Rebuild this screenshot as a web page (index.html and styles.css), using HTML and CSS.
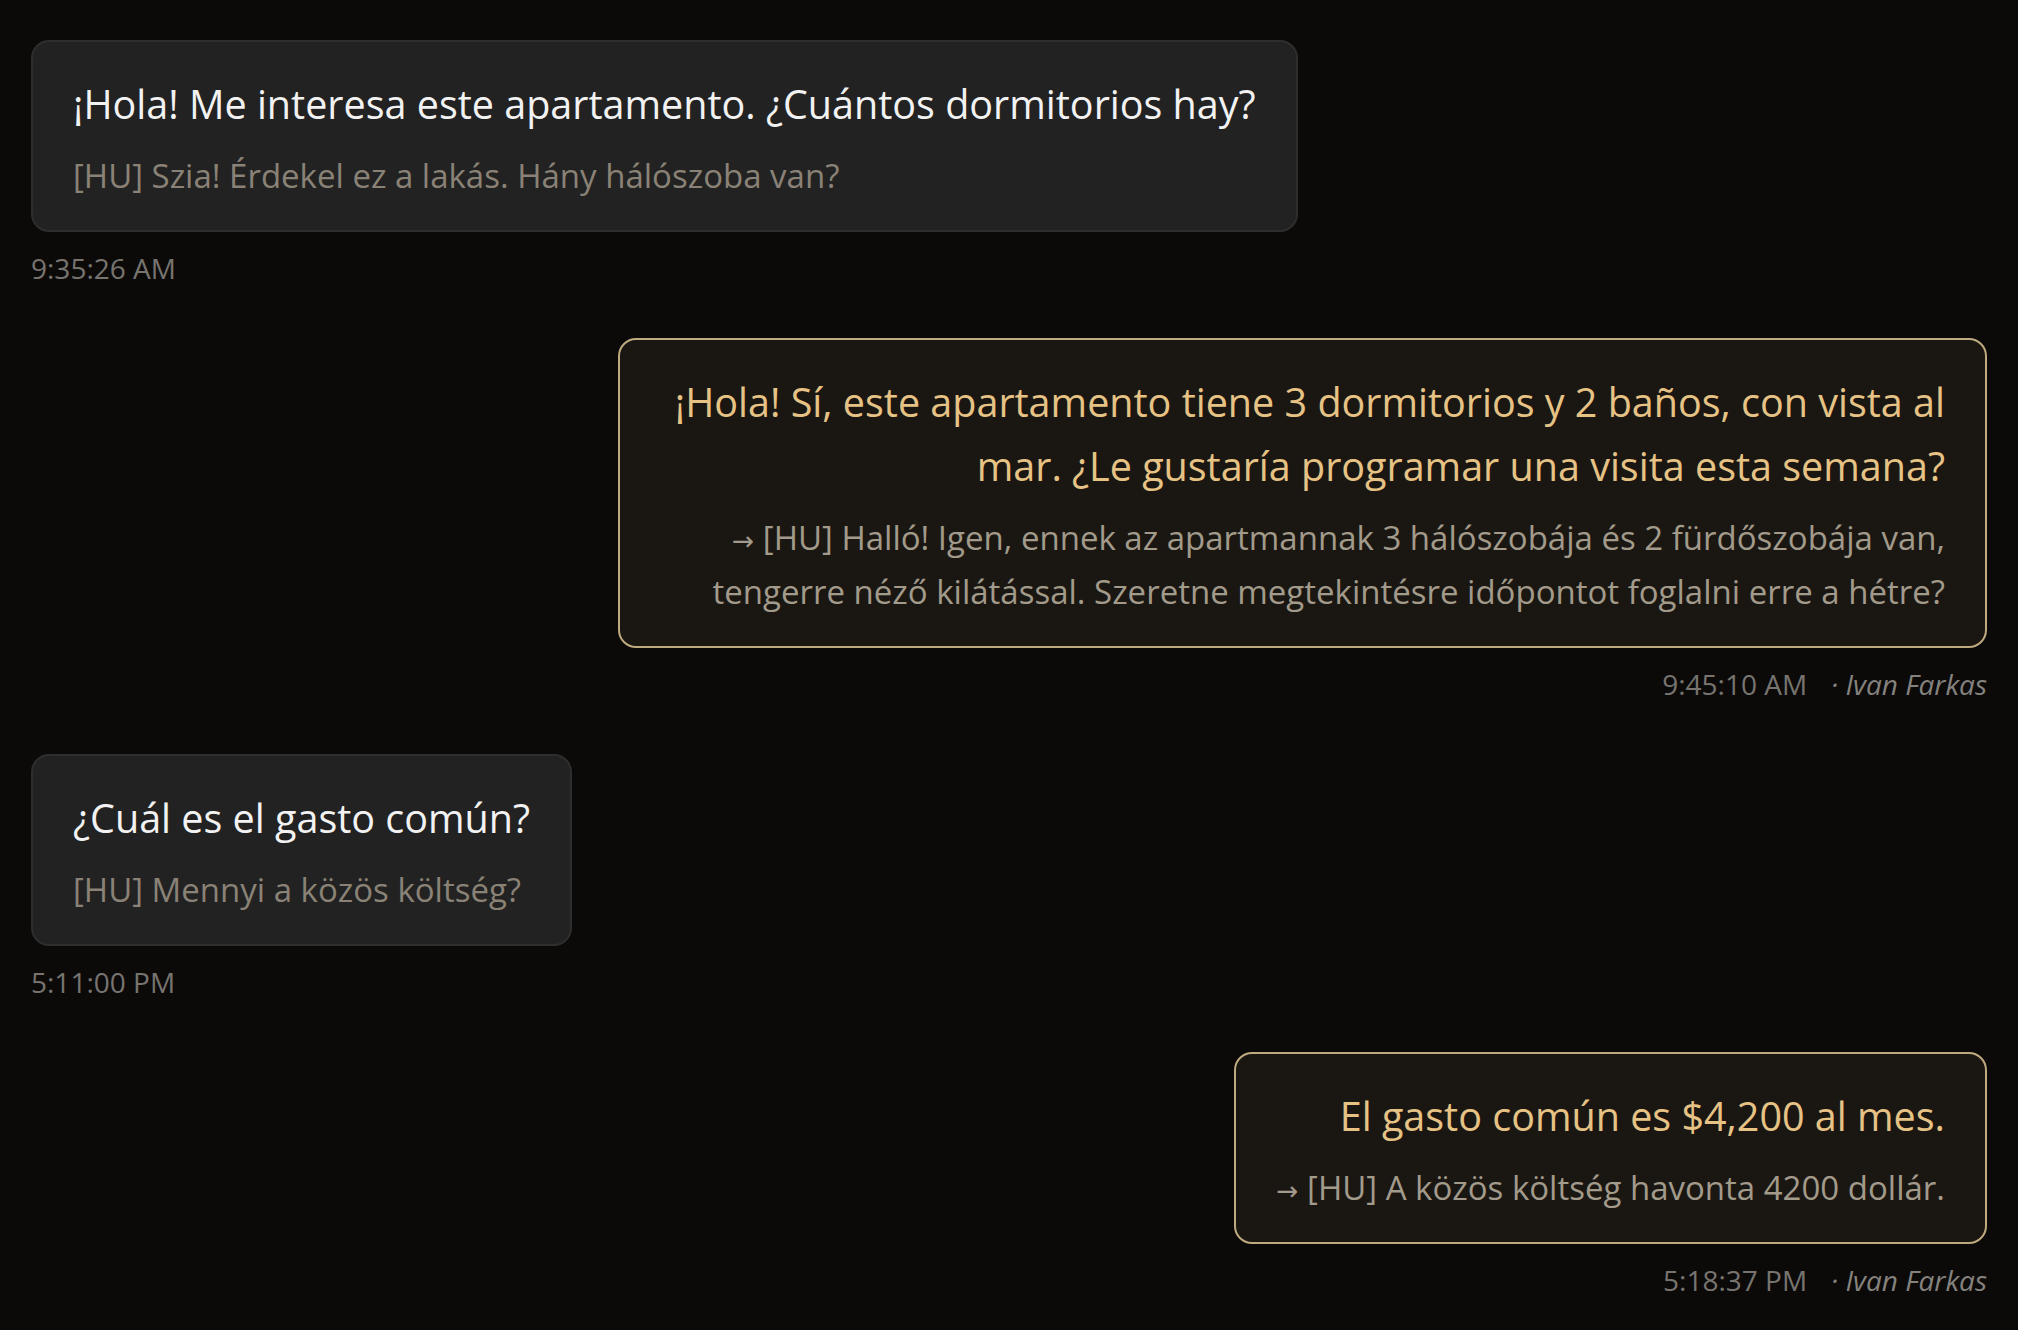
FILE: index.html
```html
<!DOCTYPE html>
<html lang="es">
<head>
<meta charset="utf-8">
<title>Chat</title>
<link rel="stylesheet" href="styles.css">
</head>
<body>
<main class="chat">
  <div class="msg msg-in">
    <div class="bubble">
      <div class="text">¡Hola! Me interesa este apartamento. ¿Cuántos dormitorios hay?</div>
      <div class="trans">[HU] Szia! Érdekel ez a lakás. Hány hálószoba van?</div>
    </div>
    <div class="meta"><span class="time">9:35:26 AM</span></div>
  </div>

  <div class="msg msg-out">
    <div class="bubble">
      <div class="text">¡Hola! Sí, este apartamento tiene 3 dormitorios y 2 baños, con vista al mar. ¿Le gustaría programar una visita esta semana?</div>
      <div class="trans"><span class="arrow">→</span>[HU] Halló! Igen, ennek az apartmannak 3 hálószobája és 2 fürdőszobája van, tengerre néző kilátással. Szeretne megtekintésre időpontot foglalni erre a hétre?</div>
    </div>
    <div class="meta"><span class="time">9:45:10 AM</span><span class="author">· Ivan Farkas</span></div>
  </div>

  <div class="msg msg-in">
    <div class="bubble">
      <div class="text">¿Cuál es el gasto común?</div>
      <div class="trans">[HU] Mennyi a közös költség?</div>
    </div>
    <div class="meta"><span class="time">5:11:00 PM</span></div>
  </div>

  <div class="msg msg-out">
    <div class="bubble">
      <div class="text">El gasto común es $4,200 al mes.</div>
      <div class="trans"><span class="arrow">→</span>[HU] A közös költség havonta 4200 dollár.</div>
    </div>
    <div class="meta"><span class="time">5:18:37 PM</span><span class="author">· Ivan Farkas</span></div>
  </div>
</main>
</body>
</html>
```

FILE: styles.css
```css
html, body {
  margin: 0;
  padding: 0;
  background: #0b0a09;
}

body {
  font-family: "Open Sans", "Noto Sans", sans-serif;
  color: #eeeeee;
}

.chat {
  display: flex;
  flex-direction: column;
  gap: 50px;
  padding: 40px 31px;
}

.msg {
  display: flex;
  flex-direction: column;
}

.msg-in {
  align-items: flex-start;
}

.msg-out {
  align-items: flex-end;
}

.bubble {
  max-width: 70%;
  box-sizing: border-box;
  padding: 30px 40px 27px;
  border-radius: 18px;
  border: 2px solid #2e2e2e;
  background: #222222;
}

.msg-out .bubble {
  background: #1a1713;
  border-color: #bfa97e;
  text-align: right;
}

.text {
  font-size: 39.5px;
  line-height: 64px;
  color: #f2f2f2;
}

.msg-out .text {
  color: #e6c385;
}

.trans {
  margin-top: 13px;
  font-size: 33px;
  line-height: 54px;
  color: #8a8276;
}

.msg-out .trans {
  color: #a29a8a;
}

.arrow {
  display: inline-block;
  margin-right: 9px;
  font-family: "DejaVu Sans", sans-serif;
  font-size: 0.8em;
  line-height: 1;
}

.meta {
  margin-top: 16px;
  font-size: 28px;
  line-height: 40px;
  color: #77746f;
  display: flex;
  gap: 24px;
}

.author {
  font-style: italic;
  color: #85827e;
}
```
